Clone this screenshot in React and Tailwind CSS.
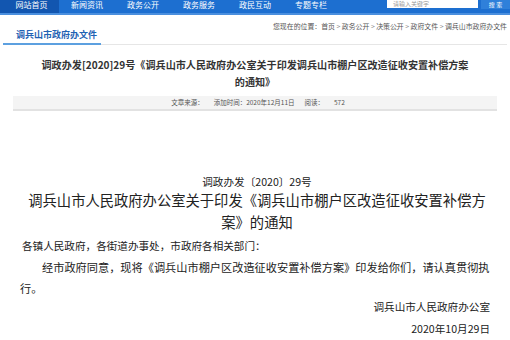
import React from "react";

const navItems = ["网站首页", "新闻资讯", "政务公开", "政务服务", "政民互动", "专题专栏"];
const crumbs = ["首页", "政务公开", "决策公开", "政府文件", "调兵山市政府办文件"];

export default function App() {
  return (
    <div
      className="w-[510px] h-[340px] overflow-hidden bg-white text-[#333]"
      style={{ fontFamily: '"Noto Sans CJK SC", "Microsoft YaHei", sans-serif' }}
    >
      {/* ===== top nav ===== */}
      <div className="h-[15px] bg-[#4a8fde]">
        <div className="h-[13px] bg-[#1d6fd0] flex items-start">
          {navItems.map((item, i) => (
            <div
              key={item}
              className={
                i === 0
                  ? "w-[59px] h-full pl-[4px] bg-[#1256b0] text-center text-white text-[8px] leading-[9px]"
                  : "w-[56px] h-full text-center text-white text-[8px] leading-[9px]"
              }
            >
              {item}
            </div>
          ))}
          <div className="flex-1" />
          <div className="w-[91px] h-[8px] bg-white text-[6px] leading-[8px] text-[#999] pl-[6px]">
            请输入关键字
          </div>
          <div className="w-[29px] h-[9px] ml-[3px] bg-[#2f80da] text-white text-[6px] leading-[9px] text-center">
            搜 索
          </div>
        </div>
      </div>

      {/* ===== column title + breadcrumb ===== */}
      <div className="mt-[14px] mx-[3px] flex items-end border-b-[1px] border-[#e6e6e6]">
        <div className="w-[98px] border-b-[2px] border-[#5ca0e0] -mb-[1px] pl-[13px] pb-[2px] text-[9px] leading-[12px] font-bold text-[#1f62b3]">
          调兵山市政府办文件
        </div>
        <div className="flex-1" />
        <div className="self-start -mt-[8px] text-[6.9px] leading-[10px] text-[#555] whitespace-nowrap">
          您现在的位置：
          {crumbs.map((c, i) => (
            <span key={c}>
              {i > 0 && <span className="mx-[1.5px] text-[#888]">&gt;</span>}
              {c}
            </span>
          ))}
        </div>
      </div>

      {/* ===== article title ===== */}
      <div className="mt-[11px] px-[40px] text-center text-[10.1px] leading-[17px] font-bold text-[#333]">
        调政办发[2020]29号《调兵山市人民政府办公室关于印发调兵山市棚户区改造征收安置补偿方案的通知》
      </div>

      {/* ===== meta bar ===== */}
      <div className="mt-[6px] mx-[13px] h-[15px] bg-[#f4f4f4] border-b-[2px] border-[#e2e2e2] flex items-center justify-center gap-[10px] text-[6.5px] text-[#555] pl-[6px]">
        <span>文章来源：</span>
        <span>添加时间：2020年12月11日</span>
        <span>
          阅读：<span className="ml-[10px]">572</span>
        </span>
      </div>

      {/* ===== document body ===== */}
      <div className="mt-[63px] ml-[20px] w-[474px] text-[#222]">
        <div className="text-center text-[10.6px] leading-[16px]">调政办发〔2020〕29号</div>
        <div className="-mt-[1px] px-[2px] text-center text-[14.3px] leading-[22px]">
          调兵山市人民政府办公室关于印发《调兵山市棚户区改造征收安置补偿方案》的通知
        </div>
        <div className="mt-[3px] text-[10.6px] leading-[20px] pl-[2px]">
          各镇人民政府，各街道办事处，市政府各相关部门：
        </div>
        <p className="mt-[1px] indent-[22px] text-[11.2px] leading-[21px]">
          经市政府同意，现将《调兵山市棚户区改造征收安置补偿方案》印发给你们，请认真贯彻执行。
        </p>
        <div className="-mt-[2px] pr-[4px] text-right text-[10.6px] leading-[20px]">调兵山市人民政府办公室</div>
        <div className="mt-[2px] pr-[4px] text-right text-[10.6px] leading-[20px]">2020年10月29日</div>
      </div>
    </div>
  );
}
